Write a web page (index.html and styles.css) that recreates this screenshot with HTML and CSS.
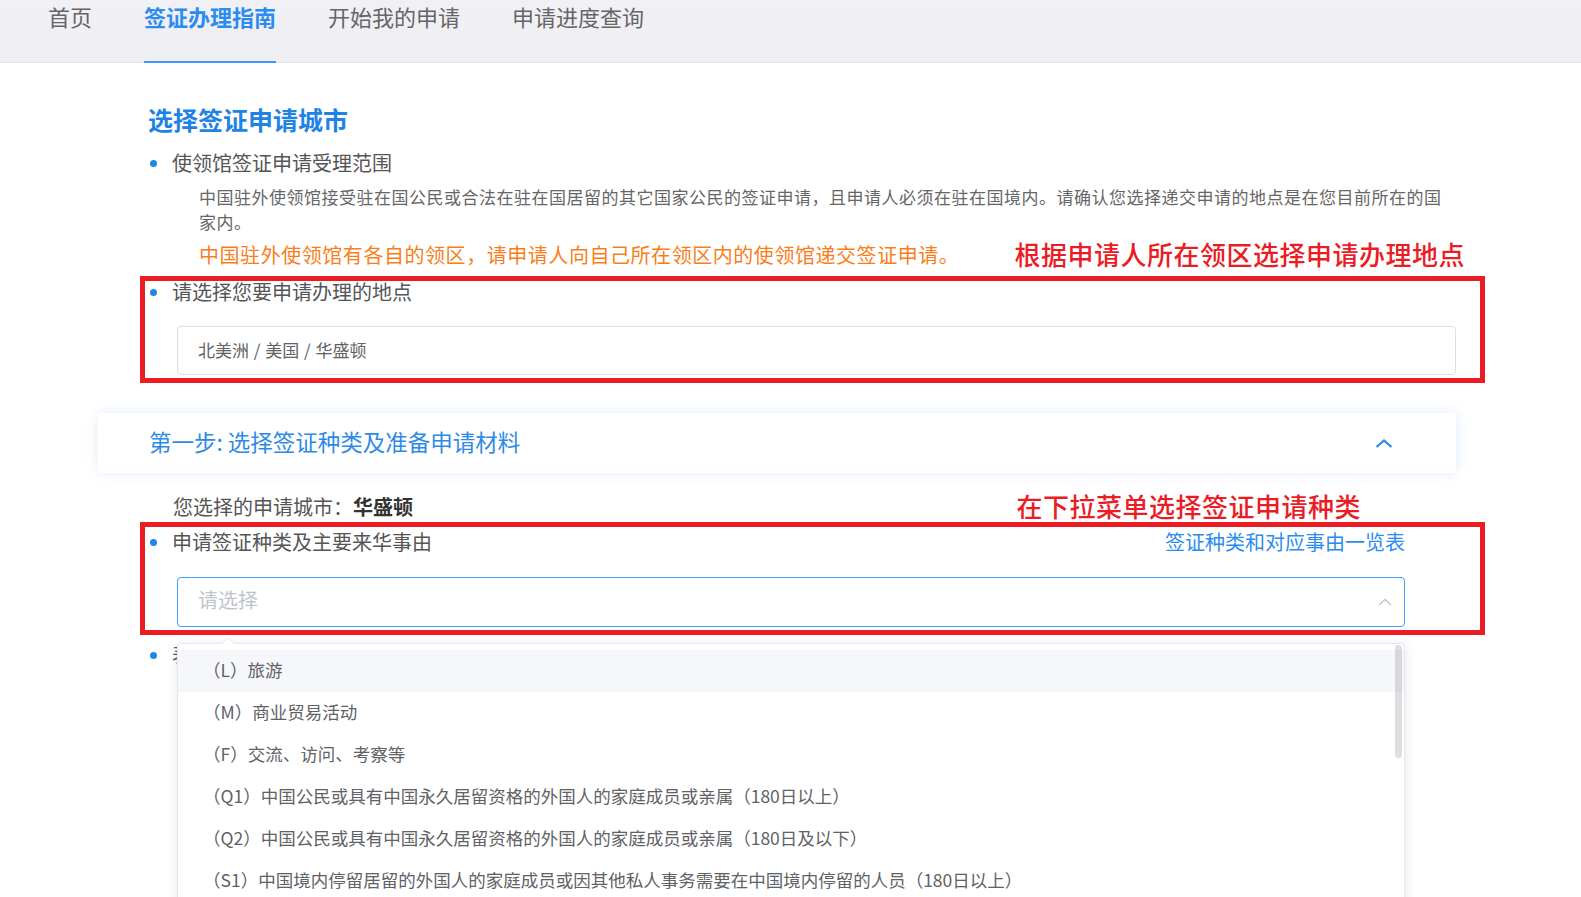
FILE: index.html
```html
<!DOCTYPE html>
<html lang="zh-CN">
<head>
<meta charset="UTF-8" />
<meta name="viewport" content="width=device-width, initial-scale=1" />
<title>签证办理指南</title>
<link rel="stylesheet" href="styles.css">
</head>
<body>
  <div class="topnav">
    <a class="tab">首页</a>
    <a class="tab active">签证办理指南</a>
    <a class="tab">开始我的申请</a>
    <a class="tab">申请进度查询</a>
  </div>

  <div class="page">
    <div class="guide">
      <h2 class="title">选择签证申请城市</h2>
      <div class="item">使领馆签证申请受理范围</div>
      <p class="desc">中国驻外使领馆接受驻在国公民或合法在驻在国居留的其它国家公民的签证申请，且申请人必须在驻在国境内。请确认您选择递交申请的地点是在您目前所在的国家内。</p>
      <div class="note-row">
        <span class="note">中国驻外使领馆有各自的领区，请申请人向自己所在领区内的使领馆递交签证申请。</span>
        <span class="mark-tip">根据申请人所在领区选择申请办理地点</span>
      </div>
      <div class="mark-box">
        <div class="item">请选择您要申请办理的地点</div>
        <div class="field">北美洲 / 美国 / 华盛顿</div>
      </div>
    </div>

    <div class="step-head">
      <span>第一步: 选择签证种类及准备申请材料</span>
      <svg viewBox="0 0 18 9" width="18" height="9"><polyline points="1.5,8 9,1.5 16.5,8" fill="none" stroke="#2d8ae6" stroke-width="2.2"/></svg>
    </div>

    <div class="guide">
      <div class="city-row">
        <span class="city">您选择的申请城市：<b>华盛顿</b></span>
        <span class="mark-tip">在下拉菜单选择签证申请种类</span>
      </div>
      <div class="mark-box pick">
        <div class="pick-head">
          <div class="item">申请签证种类及主要来华事由</div>
          <a class="link">签证种类和对应事由一览表</a>
        </div>
        <div class="select">
          <span class="placeholder">请选择</span>
          <svg viewBox="0 0 14 8" width="14" height="8"><polyline points="1,7 7,1.5 13,7" fill="none" stroke="#c0c4cc" stroke-width="1.3"/></svg>

          <!-- open options list -->
          <div class="dropdown">
            <ul class="options">
              <li class="hover">（L）旅游</li>
              <li>（M）商业贸易活动</li>
              <li>（F）交流、访问、考察等</li>
              <li>（Q1）中国公民或具有中国永久居留资格的外国人的家庭成员或亲属（180日以上）</li>
              <li>（Q2）中国公民或具有中国永久居留资格的外国人的家庭成员或亲属（180日及以下）</li>
              <li>（S1）中国境内停留居留的外国人的家庭成员或因其他私人事务需要在中国境内停留的人员（180日以上）</li>
              <li>（S2）中国境内停留居留的外国人的家庭成员或因其他私人事务需要在中国境内停留的人员（180日及以下）</li>
              <li>（Z）工作</li>
            </ul>
            <div class="thumb"></div>
          </div>
        </div>
      </div>
      <div class="item last">表格填写须知</div>
    </div>
  </div>
</body>
</html>
```

FILE: styles.css
```css
* { box-sizing: border-box; }
html, body { margin: 0; }
body {
  min-height: 1000px;
  font-family: "Noto Sans CJK SC", "Noto Sans", sans-serif;
  color: #555;
  background: #fff;
  overflow: hidden;
}

/* top tabs */
.topnav {
  display: flex;
  gap: 52px;
  height: 63px;
  padding-left: 48px;
  background: linear-gradient(#f1f1f5, #eeeef3);
  border-bottom: 1px solid #e2e4eb;
}
.tab {
  height: 63px;
  margin-bottom: -1px;
  font-size: 22px;
  line-height: 32px;
  color: #666;
  border-bottom: 2px solid transparent;
  cursor: pointer;
}
.tab.active {
  color: #2a8cf0;
  font-weight: bold;
  border-bottom-color: #3d9cf5;
}

.page {
  width: 1358px;
  margin-left: 98px;
  padding-top: 40px;
}
.guide {
  margin-left: 42px;
  width: 1345px;
}
.title {
  margin: 0;
  padding-left: 8px;
  font-size: 25px;
  line-height: 32px;
  font-weight: bold;
  color: #1f83e6;
}

.item {
  display: flex;
  align-items: center;
  margin-top: 16px;
  padding-left: 10px;
  font-size: 20px;
  line-height: 24px;
  color: #555;
}
.item::before {
  content: "";
  flex: none;
  width: 7px;
  height: 7px;
  margin-right: 15px;
  border-radius: 50%;
  background: #1f86e8;
}
.item.last { margin-top: 8px; }

.desc {
  margin: 9px 0 0;
  padding: 0 35px 0 59px;
  font-size: 17px;
  letter-spacing: 0.5px;
  line-height: 25px;
  color: #666;
}
.note-row {
  display: flex;
  align-items: center;
  height: 32px;
  margin-top: 4px;
  padding: 0 20px 0 59px;
}
.note {
  font-size: 20px;
  letter-spacing: 0.55px;
  color: #fa7d19;
}
.mark-tip {
  margin-left: auto;
  font-size: 26px;
  letter-spacing: 0.5px;
  line-height: 32px;
  font-weight: 500;
  color: #ec1c24;
  white-space: nowrap;
}

/* red outline boxes */
.mark-box {
  margin-top: 6px;
  padding: 1px 24px 3px 0;
  border: 5px solid #ec1c24;
}
.mark-box .item {
  margin-top: 0;
  padding-left: 5px;
  line-height: 20px;
}
.field {
  height: 49px;
  margin: 24px 0 0 32px;
  padding-left: 20px;
  border: 1px solid #dcdfe6;
  border-radius: 4px;
  font-size: 17px;
  word-spacing: 1px;
  line-height: 45px;
  color: #606266;
}

.step-head {
  display: flex;
  align-items: center;
  justify-content: space-between;
  height: 60px;
  margin-top: 30px;
  padding: 0 63px 0 51px;
  background: #fff;
  box-shadow: 0 0 12px rgba(90, 150, 230, 0.18);
  font-size: 22.5px;
  color: #2d8ae6;
}
.step-head span { margin-top: -5px; }
.step-head svg { display: block; }

.city-row {
  display: flex;
  align-items: center;
  height: 30px;
  margin-top: 18px;
  padding: 0 124px 0 33px;
}
.city {
  font-size: 20px;
  color: #555;
}
.city b { color: #333; }

.mark-box.pick {
  margin-top: 1px;
  padding: 5px 75px 3px 0;
}
.pick-head {
  display: flex;
  align-items: center;
  justify-content: space-between;
}
.link {
  font-size: 20px;
  line-height: 20px;
  color: #2a8cf0;
  cursor: pointer;
}

.select {
  position: relative;
  display: flex;
  align-items: center;
  justify-content: space-between;
  height: 50px;
  margin: 25px 0 0 32px;
  padding: 0 12px 0 20px;
  border: 1px solid #409eff;
  border-radius: 4px;
}
.placeholder {
  margin-top: -4px;
  font-size: 20px;
  line-height: 44px;
  color: #c0c4cc;
}
.select svg { display: block; }

.dropdown {
  position: absolute;
  top: calc(100% + 17px);
  left: -1px;
  right: -1px;
  height: 300px;
  background: #fff;
  border: 1px solid #e4e7ed;
  border-radius: 4px;
  box-shadow: 0 2px 12px rgba(0, 0, 0, 0.1);
  z-index: 10;
}
.dropdown::before,
.dropdown::after {
  content: "";
  position: absolute;
  left: 44px;
  border: 6px solid transparent;
  border-top-width: 0;
}
.dropdown::before {
  top: -7px;
  border-bottom-color: #e4e7ed;
}
.dropdown::after {
  top: -6px;
  border-bottom-color: #fff;
}
.options {
  list-style: none;
  margin: 0;
  padding: 6px 0;
  height: 100%;
  overflow: hidden;
}
.options li {
  height: 42px;
  padding: 0 25px;
  font-size: 17.5px;
  line-height: 40px;
  color: #606266;
  white-space: nowrap;
}
.options li.hover { background: #f5f7fa; }
.thumb {
  position: absolute;
  top: 1px;
  right: 2px;
  width: 7px;
  height: 113px;
  border-radius: 4px;
  background: rgba(144, 147, 153, 0.3);
}
```
